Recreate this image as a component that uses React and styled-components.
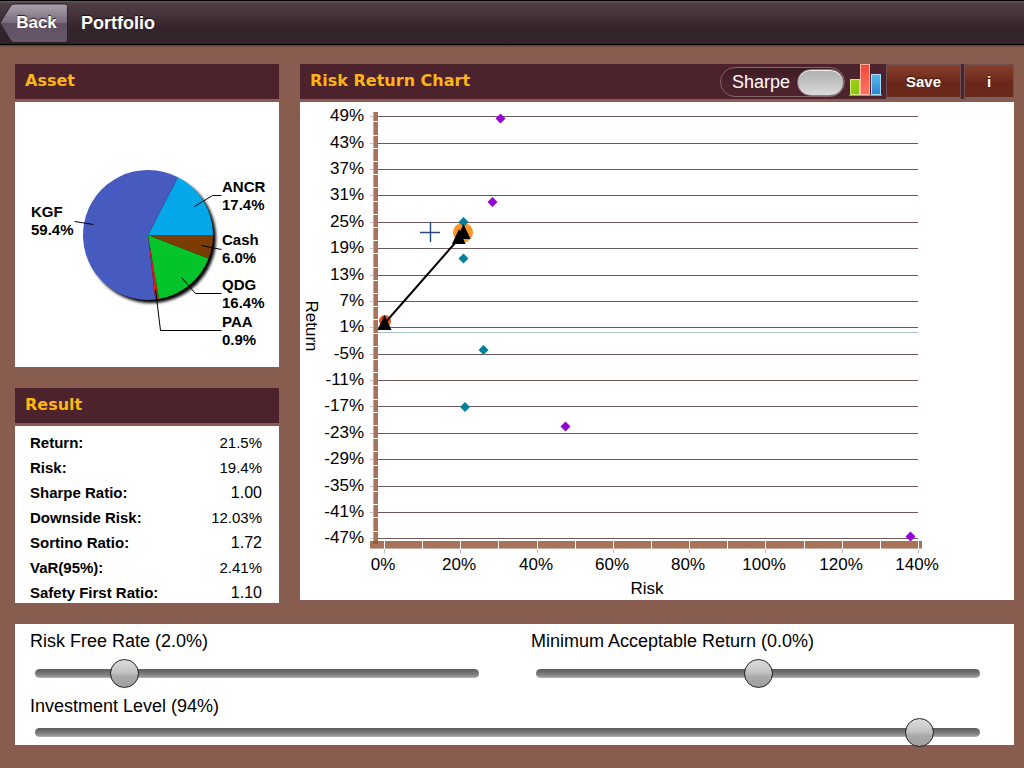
import React, { useState } from "react";
import styled, { createGlobalStyle } from "styled-components";

const GlobalStyle = createGlobalStyle`
  * { box-sizing: border-box; }
  body {
    margin: 0;
    min-height: 100vh;
    background: #885d50;
    color: #000;
    font-family: "Liberation Sans", Arial, sans-serif;
  }
`;

const NavBar = styled.header`
  display: flex;
  align-items: center;
  gap: 13px;
  height: 45px;
  border-top: 1px solid #000;
  border-bottom: 1px solid #060304;
  background: linear-gradient(#6b5c64 0, #4e3e46 2px, #44333b 14px, #34242b 26px, #32222a 100%);
  box-shadow: 0 1px 2px rgba(40, 15, 10, 0.5);
`;

const BackButton = styled.button`
  position: relative;
  width: 68px;
  height: 40px;
  padding: 0 0 0 5px;
  border: 0;
  background: none;
  color: #fff;
  font: bold 17px "Liberation Sans", Arial, sans-serif;
  text-shadow: 0 -1px 1px #2a1c28;
`;

const BackShape = styled.svg`
  position: absolute;
  inset: 0;
  z-index: -1;
`;

const BackLayer = styled.span`
  position: relative;
  z-index: 0;
`;

const NavTitle = styled.h1`
  margin: 0;
  color: #fff;
  font-size: 18px;
  line-height: 20px;
  text-shadow: 0 -1px 1px #1a0f14;
`;

const Page = styled.main`
  display: grid;
  grid-template-columns: 264px 1fr;
  column-gap: 21px;
  row-gap: 21px;
  padding: 19px 10px 23px 15px;
`;

const Column = styled.div`
  display: flex;
  flex-direction: column;
  gap: 21px;
  min-width: 0;
`;

const Panel = styled.section`
  display: flex;
  flex-direction: column;
  gap: 3px;
`;

const PanelHeader = styled.div`
  display: flex;
  align-items: center;
  justify-content: space-between;
  height: 35px;
  padding-left: 10px;
  background: #4c222c;
`;

const PanelTitle = styled.h2`
  margin: 0;
  padding-bottom: 2px;
  color: #fdb515;
  font: bold 16px/20px "DejaVu Sans", Verdana, sans-serif;
`;

const PanelBody = styled.div`
  background: #fff;
  overflow: hidden;
`;

const Drawing = styled.svg`
  display: block;
  width: 100%;
  height: auto;
  font-family: "Liberation Sans", Arial, sans-serif;
`;

const ResultBody = styled(PanelBody)`
  height: 177px;
  padding: 4px 17px 0 15px;
`;

const ResultTable = styled.table`
  width: 100%;
  border-collapse: collapse;
  line-height: 17px;
`;

const ResultName = styled.th`
  height: 25px;
  padding: 4px 0;
  font-size: 15px;
  text-align: left;
  vertical-align: top;
  white-space: nowrap;
`;

const ResultValue = styled.td`
  height: 25px;
  padding: 4px 0;
  font-size: ${(p) => (p.$ratio ? 16 : 15)}px;
  text-align: right;
  vertical-align: top;
`;

const Toolbar = styled.div`
  display: flex;
  align-items: center;
  height: 100%;
`;

const SwitchLabel = styled.label`
  display: flex;
  align-items: center;
  gap: 7px;
  height: 30px;
  padding: 1px 0 0 11px;
  border: 1px solid #85646c;
  border-radius: 15px;
  background: linear-gradient(#3a1a22, #4c222c 12px);
  color: #fff;
  font-size: 18px;
`;

const Switch = styled.input`
  appearance: none;
  width: 47px;
  height: 27px;
  margin: 0;
  border: 1px solid #8b7a7e;
  border-radius: 14px;
  background: linear-gradient(#b0b0b0, #c2c2c2 50%, #dcdcdc);
  box-shadow: inset 0 1px 0 #eee;
`;

const BarsIcon = styled.svg`
  width: 34px;
  height: 35px;
  margin: 0 3px 0 4px;
`;

const ToolButton = styled.button`
  width: ${(p) => p.$width}px;
  height: 35px;
  margin-right: ${(p) => (p.$last ? 0 : 3)}px;
  padding: 0;
  border: 1px solid #6f5054;
  border-bottom: 2px solid #79605f;
  background: linear-gradient(#853f2b, #7a3423 9px, #6a2719 18px, #69291a);
  color: #fff;
  font: bold 15px "Liberation Sans", Arial, sans-serif;
  text-shadow: 0 -1px 1px #3a120a;
`;

const Controls = styled.form`
  grid-column: 1 / -1;
  display: grid;
  grid-template-columns: 1fr 1fr;
  column-gap: 52px;
  row-gap: 18px;
  padding: 7px 34px 8px 15px;
  background: #fff;
`;

const Field = styled.div`
  grid-column: ${(p) => (p.$wide ? "1 / -1" : "auto")};
  display: flex;
  flex-direction: column;
  gap: ${(p) => (p.$wide ? 12 : 18)}px;
`;

const FieldLabel = styled.label`
  font-size: 18px;
  line-height: 20px;
`;

const Range = styled.input`
  appearance: none;
  height: 9px;
  margin: 0 0 0 5px;
  border-radius: 5px;
  background: linear-gradient(#5c5c5c, #6e6e6e 3px, #8c8c8c 7px, #b8b8b8);

  &::-webkit-slider-thumb {
    appearance: none;
    width: 29px;
    height: 29px;
    border: 1px solid #222;
    border-radius: 50%;
    background: linear-gradient(#dcdcdc, #c4c4c4 12px, #a8a8a8 17px, #a0a0a0);
  }
`;

const CX = 133;
const CY = 133;
const R = 65;

const slices = [
  { name: "ANCR", share: 17.4, color: "#04a8e8", x: 207, y: 90, line: "179,104 197,93 206,93" },
  { name: "KGF", share: 59.4, color: "#475abf", x: 16, y: 115, line: "59,119 78,122" },
  { name: "PAA", share: 0.9, color: "#dc1c1c", x: 207, y: 225, line: "140,187 145,228 206,228" },
  { name: "QDG", share: 16.4, color: "#04c42c", x: 207, y: 188, line: "166,175 180,191 206,191" },
  { name: "Cash", share: 5.9, label: "6.0", color: "#7c3c04", x: 207, y: 143, line: "186,143 206,147" },
];

const rim = (percent) => {
  const a = (percent / 100) * Math.PI * 2;
  return `${CX + R * Math.cos(a)} ${CY - R * Math.sin(a)}`;
};

function AssetPie() {
  let start = 0;
  const parts = slices.map((s) => {
    const from = start;
    start += s.share;
    const large = s.share > 50 ? 1 : 0;
    return { ...s, d: `M${CX} ${CY}L${rim(from)}A${R} ${R} 0 ${large} 0 ${rim(start)}Z` };
  });
  return (
    <Drawing viewBox="0 0 264 265" role="img" aria-label="Asset allocation">
      <defs>
        <filter id="pieShadow" x="-20%" y="-20%" width="150%" height="150%">
          <feGaussianBlur stdDeviation="1.5" />
        </filter>
      </defs>
      <circle cx={CX + 3} cy={CY + 3} r={R} fill="#000" filter="url(#pieShadow)" />
      {parts.map((s) => (
        <path key={s.name} d={s.d} fill={s.color} />
      ))}
      {parts.map((s) => (
        <g key={s.name}>
          <polyline points={s.line} fill="none" stroke="#000" transform="translate(0.5 0.5)" />
          <text fontSize="15" fontWeight="bold">
            <tspan x={s.x} y={s.y}>{s.name}</tspan>
            <tspan x={s.x} y={s.y + 18}>{s.label || s.share.toFixed(1)}%</tspan>
          </text>
        </g>
      ))}
    </Drawing>
  );
}

const returns = Array.from({ length: 17 }, (_, i) => ({
  value: 49 - 6 * i,
  y: Math.round(14.2 + 26.39 * i),
}));
const minorTicks = Array.from({ length: 32 }, (_, i) => Math.round(19.4 + 13.2 * i));
const riskTicks = Array.from({ length: 15 }, (_, i) => ({
  value: i * 10,
  x: Math.round(84 + 38.14 * i),
}));

const PURPLE = "#9404d4";
const TEAL = "#04809c";
const points = [
  [200.5, 16.5, PURPLE],
  [192.5, 100, PURPLE],
  [265.5, 324.5, PURPLE],
  [610.5, 434.5, PURPLE],
  [163.5, 120, TEAL],
  [163.5, 156.5, TEAL],
  [183.5, 248, TEAL],
  [165, 305, TEAL],
];

function RiskReturnChart() {
  return (
    <Drawing viewBox="0 0 714 498" role="img" aria-label="Risk Return Chart">
      {returns.map((r) => (
        <g key={r.value}>
          <rect x="78" y={r.y} width="540" height="1" fill="#6c5858" />
          <rect x="70" y={r.y} width="4" height="1" fill="#b4c0c4" />
          <text x="64" y={r.y + 5} fontSize="17" textAnchor="end">{r.value}%</text>
        </g>
      ))}
      <rect x="78" y="230" width="540" height="1" fill="#a9c4c8" />

      <rect x="70" y="439" width="552" height="8" fill="#a87358" />
      <rect x="70" y="446" width="552" height="1" fill="#cdb0a2" />
      <rect x="73" y="10" width="5" height="432" fill="#a87358" />
      <rect x="73" y="10" width="1" height="429" fill="#c9a896" />
      <rect x="73" y="439" width="5" height="3" fill="#935c44" />
      {minorTicks.map((y) => (
        <rect key={y} x="73" y={y} width="5" height="1" fill="#fff" />
      ))}
      {riskTicks.map((t) => (
        <g key={t.value}>
          <rect x={t.x} y="439" width="1" height="8" fill="#fff" />
          {t.value % 20 === 0 && (
            <>
              <rect x={t.x} y="447" width="1" height="4" fill="#b4c0c4" />
              <text x={t.x - 1} y="468" fontSize="17" textAnchor="middle">{t.value}%</text>
            </>
          )}
        </g>
      ))}
      <text x="347" y="492" fontSize="17" textAnchor="middle">Risk</text>
      <text transform="translate(6 224) rotate(90)" fontSize="17" textAnchor="middle">Return</text>

      <circle cx="163" cy="130.500" r="10" fill="#fc9428" />
      <circle cx="85" cy="219" r="6" fill="#e8501c" />
      {points.map(([x, y, color]) => (
        <path key={`${x}-${y}`} d={`M${x} ${y - 5}L${x + 5} ${y}L${x} ${y + 5}L${x - 5} ${y}Z`} fill={color} />
      ))}
      <path d="M84.5 221.500L159 136.500" stroke="#000" strokeWidth="2" />
      <path d="M84.500 213L91.500 228H77.500ZM159 127L165.500 142H152ZM163.500 122L170.500 137H156.500Z" />
      <path d="M130.500 120V140M120 130.500H140" stroke="#24487c" strokeWidth="1.4" />
    </Drawing>
  );
}

const results = [
  { name: "Return:", value: "21.5%" },
  { name: "Risk:", value: "19.4%" },
  { name: "Sharpe Ratio:", value: "1.00", ratio: true },
  { name: "Downside Risk:", value: "12.03%" },
  { name: "Sortino Ratio:", value: "1.72", ratio: true },
  { name: "VaR(95%):", value: "2.41%" },
  { name: "Safety First Ratio:", value: "1.10", ratio: true },
];

function SliderField({ id, label, digits, start, min, max, step, wide }) {
  const [value, setValue] = useState(start);
  return (
    <Field $wide={wide}>
      <FieldLabel htmlFor={id}>{`${label} (${value.toFixed(digits)}%)`}</FieldLabel>
      <Range
        id={id}
        type="range"
        min={min}
        max={max}
        step={step}
        value={value}
        onChange={(e) => setValue(Number(e.target.value))}
      />
    </Field>
  );
}

export default function App() {
  return (
    <>
      <GlobalStyle />
      <NavBar>
        <BackLayer>
          <BackButton type="button">
            <BackShape width="68" height="40" viewBox="0 0 68 40" aria-hidden="true">
              <defs>
                <linearGradient id="backFill" x1="0" y1="0" x2="0" y2="1">
                  <stop offset="0" stopColor="#aaa2ae" />
                  <stop offset="0.49" stopColor="#796b7c" />
                  <stop offset="0.51" stopColor="#625165" />
                  <stop offset="1" stopColor="#665669" />
                </linearGradient>
              </defs>
              <path
                d="M0 20L10.500 3Q12 1 14.500 1H65Q67.500 1 67.500 3.500V37Q67.500 39.500 65 39.500H14.500Q12 39.500 10.500 37.500Z"
                fill="url(#backFill)"
                stroke="#2c1f28"
              />
            </BackShape>
            Back
          </BackButton>
        </BackLayer>
        <NavTitle>Portfolio</NavTitle>
      </NavBar>

      <Page>
        <Column>
          <Panel>
            <PanelHeader>
              <PanelTitle>Asset</PanelTitle>
            </PanelHeader>
            <PanelBody>
              <AssetPie />
            </PanelBody>
          </Panel>
          <Panel>
            <PanelHeader>
              <PanelTitle>Result</PanelTitle>
            </PanelHeader>
            <ResultBody>
              <ResultTable>
                <tbody>
                  {results.map((r) => (
                    <tr key={r.name}>
                      <ResultName scope="row">{r.name}</ResultName>
                      <ResultValue $ratio={r.ratio}>{r.value}</ResultValue>
                    </tr>
                  ))}
                </tbody>
              </ResultTable>
            </ResultBody>
          </Panel>
        </Column>

        <Column>
          <Panel>
            <PanelHeader>
              <PanelTitle>Risk Return Chart</PanelTitle>
              <Toolbar>
                <SwitchLabel>
                  Sharpe
                  <Switch type="checkbox" role="switch" />
                </SwitchLabel>
                <BarsIcon viewBox="0 0 34 35" aria-hidden="true">
                  <defs>
                    <linearGradient id="barGreen" x1="0" y1="0" x2="1" y2="1">
                      <stop offset="0" stopColor="#a4d010" />
                      <stop offset="1" stopColor="#84c010" />
                    </linearGradient>
                    <linearGradient id="barRed" x1="0" y1="0" x2="0" y2="1">
                      <stop offset="0" stopColor="#f04838" />
                      <stop offset="1" stopColor="#fc7464" />
                    </linearGradient>
                    <linearGradient id="barBlue" x1="0" y1="0" x2="0" y2="1">
                      <stop offset="0" stopColor="#58b8ec" />
                      <stop offset="1" stopColor="#2c84d0" />
                    </linearGradient>
                  </defs>
                  <rect x="1.500" y="15.500" width="9" height="15" fill="url(#barGreen)" stroke="#d0e878" />
                  <rect x="11.500" y="0.500" width="9" height="30" fill="url(#barRed)" stroke="#fcb0a0" />
                  <rect x="22.500" y="10.500" width="9" height="20" fill="url(#barBlue)" stroke="#a8dcf8" />
                  <rect x="0" y="31" width="33" height="1" fill="#a89098" />
                </BarsIcon>
                <ToolButton type="button" $width={75}>Save</ToolButton>
                <ToolButton type="button" $width={50} $last>i</ToolButton>
              </Toolbar>
            </PanelHeader>
            <PanelBody>
              <RiskReturnChart />
            </PanelBody>
          </Panel>
        </Column>

        <Controls>
          <SliderField id="risk-free" label="Risk Free Rate" digits={1} start={2} min={0} max={11} step={0.1} />
          <SliderField id="min-return" label="Minimum Acceptable Return" digits={1} start={0} min={-10} max={10} step={0.1} />
          <SliderField id="investment" label="Investment Level" digits={0} start={94} min={0} max={99} step={1} wide />
        </Controls>
      </Page>
    </>
  );
}
